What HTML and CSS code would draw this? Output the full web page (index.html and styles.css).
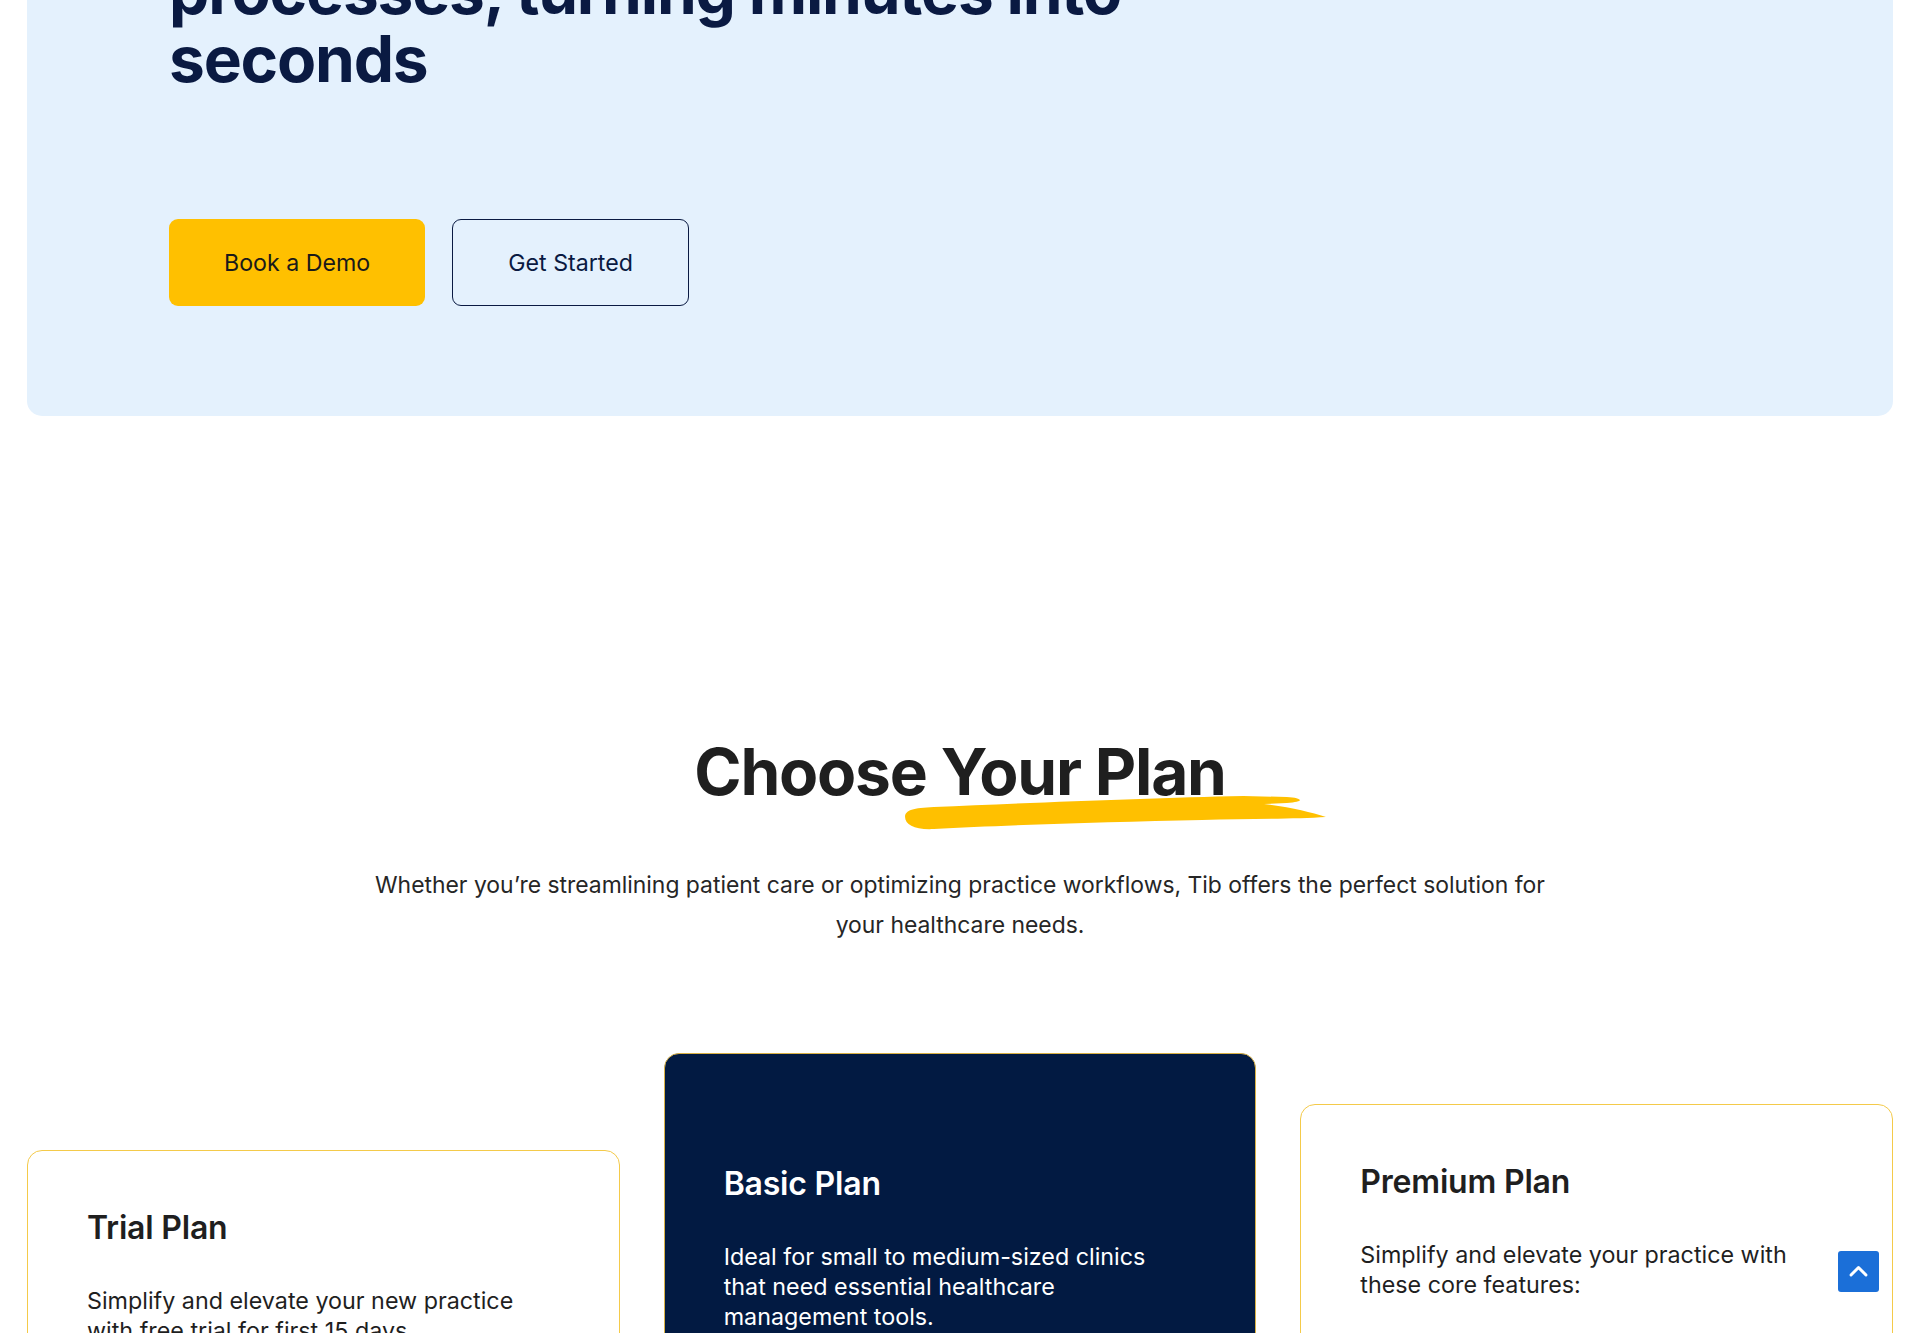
FILE: index.html
```html
<!DOCTYPE html>
<html lang="en">
<head>
<meta charset="utf-8">
<title>Tib – Choose Your Plan</title>
<link rel="stylesheet" href="styles.css">
</head>
<body>
<div class="page">
  <section class="hero">
    <h1 class="hero-title">processes, turning minutes into seconds</h1>
    <div class="hero-actions">
      <a class="btn btn-primary" href="#">Book a Demo</a>
      <a class="btn btn-outline" href="#">Get Started</a>
    </div>
  </section>

  <section class="plans">
    <h2 class="plans-title">Choose <span class="hl">Your Plan<svg class="brush" viewBox="0 0 412 38" preserveAspectRatio="none" aria-hidden="true"><path d="M2,22 C2,15 10,13 30,12 C120,8 240,3 330,1 L372,2 C388,3 390,7 372,8 L350,9 C375,12 395,17 410,22 C380,24 330,24 290,25 C200,27 100,30 30,34 C12,35 2,30 2,22 Z" fill="#FFC000"/></svg></span></h2>
    <p class="plans-sub">Whether you’re streamlining patient care or optimizing practice workflows, Tib offers the perfect solution for your healthcare needs.</p>

    <div class="plan-grid">
      <article class="plan plan-trial">
        <h3 class="plan-name">Trial Plan</h3>
        <p class="plan-desc">Simplify and elevate your new practice with free trial for first 15 days.</p>
      </article>
      <article class="plan plan-basic">
        <h3 class="plan-name">Basic Plan</h3>
        <p class="plan-desc">Ideal for small to medium-sized clinics that need essential healthcare management tools.</p>
      </article>
      <article class="plan plan-premium">
        <h3 class="plan-name">Premium Plan</h3>
        <p class="plan-desc">Simplify and elevate your practice with these core features:</p>
      </article>
    </div>
  </section>
</div>

<a class="to-top" href="#" aria-label="Back to top">
  <svg viewBox="0 0 41 41" width="41" height="41"><polyline points="13,24 20.5,16.5 28,24" fill="none" stroke="#fff" stroke-width="3" stroke-linecap="round" stroke-linejoin="round"/></svg>
</a>
</body>
</html>
```

FILE: styles.css
```css
html {
  scrollbar-width: none;
}
html::-webkit-scrollbar {
  display: none;
}
body {
  margin: 0;
  background: #ffffff;
  font-family: "Inter", "Liberation Sans", sans-serif;
  color: #1f1f1f;
}
.page {
  padding: 0 27px;
}

/* HERO */
.hero {
  margin-top: -143px;
  padding: 100px 142px 110px;
  background: #e4f1fd;
  border-radius: 15px;
}
.hero-title {
  margin: 0;
  max-width: 1100px;
  font-size: 64px;
  line-height: 68px;
  font-weight: 700;
  letter-spacing: -1.2px;
  color: #0a1a42;
}
.hero-actions {
  display: flex;
  gap: 27px;
  margin-top: 126px;
}
.btn {
  display: flex;
  align-items: center;
  justify-content: center;
  box-sizing: border-box;
  height: 87px;
  padding: 0 55px;
  border-radius: 9px;
  font-size: 23.2px;
  font-weight: 400;
  text-decoration: none;
}
.btn-primary {
  background: #ffc000;
  color: #1a1a1a;
}
.btn-outline {
  border: 1.5px solid #0a1a42;
  color: #0a1a42;
  background: transparent;
}

/* PLANS */
.plans {
  margin-top: 318px;
  text-align: center;
}
.plans-title {
  position: relative;
  z-index: 0;
  margin: 0;
  font-size: 64px;
  line-height: 1.2;
  font-weight: 700;
  letter-spacing: -1.2px;
  color: #1f1f1f;
}
.hl {
  position: relative;
}
.brush {
  position: absolute;
  z-index: -1;
  left: -38px;
  top: 62px;
  width: 425px;
  height: 38px;
}
.plans-sub {
  max-width: 1190px;
  margin: 54px auto 0;
  font-size: 22.9px;
  line-height: 40px;
  color: #262626;
}

.plan-grid {
  display: flex;
  align-items: flex-start;
  gap: 44px;
  margin-top: 108px;
  text-align: left;
}
.plan {
  flex: 1 1 0;
  min-width: 0;
  padding: 58px 60px 220px 59px;
  background: #ffffff;
  border: 1px solid #f4ca4a;
  border-radius: 15px;
}
.plan-trial {
  margin-top: 97px;
}
.plan-premium {
  margin-top: 51px;
}
.plan-basic {
  padding-top: 111px;
  background: #021a42;
  border-color: #d9b144;
  color: #ffffff;
}
.plan-name {
  margin: 0 0 39px;
  font-size: 32px;
  line-height: 1.2;
  font-weight: 600;
  letter-spacing: -0.2px;
}
.plan-desc {
  margin: 0;
  max-width: 440px;
  font-size: 23.3px;
  line-height: 30px;
}

.to-top {
  position: fixed;
  right: 41px;
  bottom: 41px;
  width: 41px;
  height: 41px;
  border-radius: 3px;
  background: #1b6fd8;
  display: flex;
}
```
